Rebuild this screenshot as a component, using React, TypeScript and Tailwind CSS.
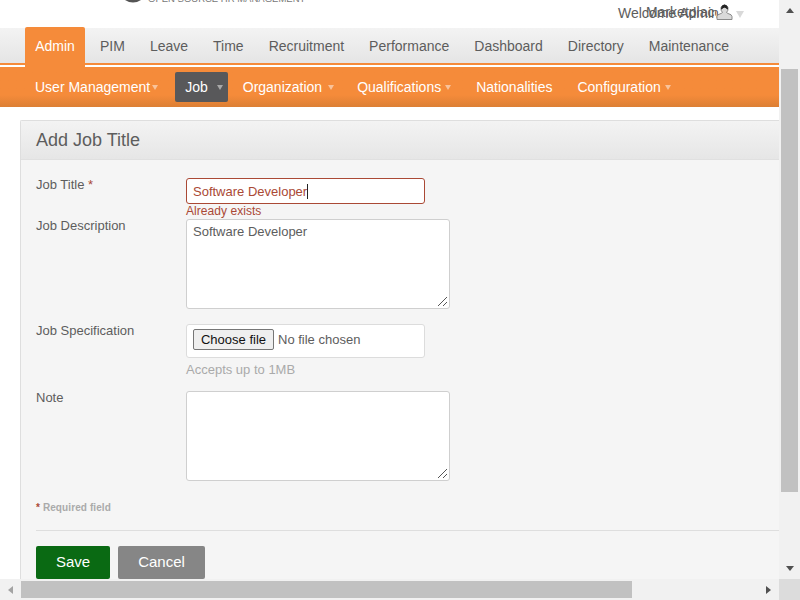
import React from 'react';

const topMenu = ['PIM', 'Leave', 'Time', 'Recruitment', 'Performance', 'Dashboard', 'Directory', 'Maintenance'];

const subMenu = [
  { label: 'User Management', caret: 'ml-[2px]', gap: 'mr-[17px]' },
  { label: 'Job', caret: 'ml-[9px]', active: true, gap: 'mr-[15px]' },
  { label: 'Organization', caret: 'ml-[6px]', gap: 'mr-[23px]' },
  { label: 'Qualifications', caret: 'ml-[4px]', gap: 'mr-[25px]' },
  { label: 'Nationalities', caret: '', gap: 'mr-[25px]' },
  { label: 'Configuration', caret: 'ml-[4px]', gap: '' },
];

const Caret = ({ className }: { className: string }) => (
  <span className={`inline-block w-0 h-0 border-x-[3.5px] border-x-transparent border-t-[5px] ${className}`} />
);

const Label = ({ children }: { children: React.ReactNode }) => (
  <label className="block w-[150px] shrink-0 -mt-[1px] text-[13px] leading-[15px] text-[#5d5d5d]">{children}</label>
);

const Resizer = () => (
  <svg className="absolute right-[1px] bottom-[1px]" width="11" height="11" viewBox="0 0 11 11">
    <path d="M1 10 L10 1 M6 10 L10 6" stroke="#555" strokeWidth="1" fill="none" />
  </svg>
);

export default function App() {
  return (
    <div className="w-[800px] h-[600px] overflow-hidden flex flex-col bg-white font-['Liberation_Sans',Arial,sans-serif]">
      <div className="flex flex-1 min-h-0">
        <div className="w-[779px] shrink-0 overflow-hidden flex flex-col">
          {/* Top strip, page is scrolled so the logo is cut off */}
          <div className="relative h-[28px] shrink-0 bg-white">
            <svg className="absolute left-[125px] top-0" width="16" height="3" viewBox="0 0 16 3">
              <path d="M0 0 Q8 5 16 0 Z" fill="#555" />
            </svg>
            <span className="absolute left-[148px] top-[-7px] text-[9.5px] leading-[11px] text-[#777]">OPEN SOURCE HR MANAGEMENT</span>
            <span className="absolute left-[618px] top-[5px] text-[14px] leading-[16px] text-[#5d5d5d]">Welcome Admin</span>
            <span className="absolute left-[646px] top-[4px] w-[70px] overflow-hidden whitespace-nowrap text-[14px] leading-[16px] text-[#5d5d5d]">Marketplace</span>
            <svg className="absolute left-[716px] top-[4px]" width="17" height="16" viewBox="0 0 17 16">
              <path d="M1 15.5 V12.5 Q1 10.5 5 9.5 L6.5 8.5 Q4.5 6.5 5 3.5 Q6 1 8.5 1 Q11 1 12 3.5 Q12.5 6.5 10.5 8.5 L12 9.5 Q16 10.5 16 12.5 V15.5 Z" fill="#d9d9d9" stroke="#8a8a8a" />
              <path d="M5.5 5 Q8.5 1.5 11.5 5 Q11.5 1 8.5 1 Q5.5 1 5.5 5 Z" fill="#222" stroke="#222" />
            </svg>
            <Caret className="absolute left-[736px] top-[11px] border-t-[#d9d9d9] border-x-[4px] border-t-[7px]" />
          </div>

          {/* Main menu */}
          <div className="relative h-[37px] shrink-0 bg-gradient-to-b from-[#f3f3f3] to-[#e5e5e5] border-b-[2px] border-b-[#f58b3a]">
            <div className="flex h-[35px] pl-[25px] text-[14px] text-[#5d5d5d]">
              <div className="-mt-[1px] h-[40px] w-[60px] rounded-t-[2px] bg-[#f58b3a] text-white flex justify-center pt-[11px] leading-[16px] relative z-10">Admin</div>
              <div className="flex pl-[15px] pt-[10px] leading-[16px] gap-[25px]">
                {topMenu.map((item) => (
                  <span key={item}>{item}</span>
                ))}
              </div>
            </div>
          </div>

          {/* Sub menu */}
          <div className="h-[42px] shrink-0 border-t-[2px] border-t-white bg-gradient-to-b from-[#f58b3a] from-70% to-[#dc7f34] flex items-center pl-[35px] text-[14px] text-white">
            {subMenu.map((item) => (
              <div
                key={item.label}
                className={`flex items-center ${item.gap} ${item.active ? 'h-[30px] pl-[10px] pr-[5px] rounded-[2px] bg-[#58585a]' : ''}`}
              >
                <span>{item.label}</span>
                {item.caret && (
                  <Caret className={`${item.caret} ${item.active ? 'border-t-[#a8a8a8]' : 'border-t-[#f9c39a]'}`} />
                )}
              </div>
            ))}
          </div>

          {/* Form box */}
          <div className="mt-[13px] ml-[20px] flex-1 min-h-0 border border-[#dedede] border-r-0 border-b-0 rounded-tl-[2px] bg-[#f5f5f5]">
            <div className="h-[39px] flex items-center pl-[15px] bg-gradient-to-b from-[#f3f3f3] to-[#e6e6e6] border-b border-[#e0e0e0] text-[18px] text-[#5d5d5d]">
              Add Job Title
            </div>
            <div className="pl-[15px] pt-[18px]">
              <div className="flex">
                <Label>Job Title <span className="text-[#aa4935]">*</span></Label>
                <div>
                  <div className="w-[239px] h-[26px] rounded-[3px] border border-[#aa4935] bg-white pl-[6px] pt-[1px] flex items-center text-[13px] text-[#aa4935]">
                    Software Developer<span className="inline-block w-px h-[15px] bg-[#222]" />
                  </div>
                  <div className="text-[12px] leading-[14px] tracking-[0.05px] text-[#aa4935]">Already exists</div>
                </div>
              </div>

              <div className="flex mt-[1px]">
                <Label>Job Description</Label>
                <div className="relative w-[264px] h-[90px] rounded-[3px] border border-[#cfcfcf] bg-white pl-[6px] pt-[4px] text-[13px] leading-[15px] text-[#5d5d5d]">
                  Software Developer
                  <Resizer />
                </div>
              </div>

              <div className="flex mt-[15px]">
                <Label>Job Specification</Label>
                <div>
                  <div className="w-[239px] h-[34px] rounded-[3px] border border-[#dcdcdc] bg-white pl-[6px] pb-[3px] flex items-center text-[13px] text-[#5d5d5d]">
                    <button className="h-[21px] w-[81px] rounded-[2px] border border-[#767676] bg-[#efefef] text-[13px] text-[#111]">Choose file</button>
                    <span className="ml-[4px]">No file chosen</span>
                  </div>
                  <div className="mt-[5px] text-[13px] leading-[14px] text-[#aaaaaa]">Accepts up to 1MB</div>
                </div>
              </div>

              <div className="flex mt-[14px]">
                <Label>Note</Label>
                <div className="relative w-[264px] h-[90px] rounded-[3px] border border-[#cfcfcf] bg-white">
                  <Resizer />
                </div>
              </div>

              <div className="mt-[21px] text-[10px] leading-[12px] tracking-[0.1px] font-bold text-[#aaaaaa]">
                <span className="text-[#aa4935]">*</span> Required field
              </div>
              <div className="mt-[16px] h-px bg-[#dedede]" />
              <div className="mt-[15px] flex gap-[8px] text-[15px] text-white">
                <button className="w-[74px] h-[33px] rounded-[2px] bg-[#0a6a13]">Save</button>
                <button className="w-[87px] h-[33px] rounded-[2px] bg-[#868686]">Cancel</button>
              </div>
            </div>
          </div>
        </div>

        {/* Vertical scrollbar */}
        <div className="w-[21px] shrink-0 bg-[#f1f1f1] flex flex-col items-center">
          <div className="h-[21px] flex items-center justify-center">
            <span className="w-0 h-0 border-x-[4.5px] border-x-transparent border-b-[5px] border-b-[#505050]" />
          </div>
          <div className="mt-[48px] w-[17px] h-[423px] bg-[#c1c1c1]" />
          <div className="mt-auto h-[21px] flex items-center justify-center">
            <span className="w-0 h-0 border-x-[4.5px] border-x-transparent border-t-[5px] border-t-[#505050]" />
          </div>
        </div>
      </div>

      {/* Horizontal scrollbar */}
      <div className="h-[21px] shrink-0 flex bg-[#f1f1f1]">
        <div className="w-[21px] flex items-center justify-center">
          <span className="w-0 h-0 border-y-[4.5px] border-y-transparent border-r-[5px] border-r-[#a3a3a3]" />
        </div>
        <div className="mt-[2px] w-[611px] h-[17px] bg-[#c1c1c1]" />
        <div className="ml-auto w-[21px] flex items-center justify-center">
          <span className="w-0 h-0 border-y-[4.5px] border-y-transparent border-l-[5px] border-l-[#505050]" />
        </div>
        <div className="w-[21px] bg-[#dcdcdc]" />
      </div>
    </div>
  );
}
